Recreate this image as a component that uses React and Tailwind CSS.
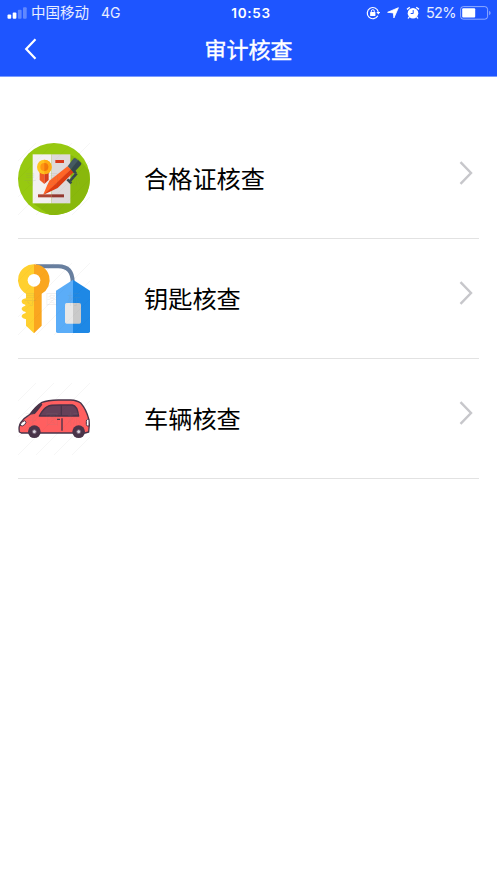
import React from 'react';

// Faint stock-art lines behind each icon
function Hatch({ dark }) {
  return (
    <g stroke={dark ? '#000' : '#999'} strokeOpacity={dark ? '0.03' : '0.1'} strokeWidth="1.5" fill="none">
      <path d="M24 78 78 24M24 132 132 24M24 186 186 24M24 240 240 24M78 240 240 78M132 240 240 132M186 240 240 186" />
    </g>
  );
}

function Watermark() {
  return (
    <text
      x="40"
      y="147"
      fontSize="40"
      letterSpacing="26"
      fill="#888"
      fillOpacity="0.13"
      className="font-['Noto_Sans_CJK_SC',sans-serif]"
    >
      寻图标
    </text>
  );
}

function CertificateIcon() {
  return (
    <svg viewBox="24 24 216 216" className="size-[72px] shrink-0 overflow-visible">
      <Hatch />
      <circle cx="132" cy="132" r="108" fill="#97c910" />
      <path d="M181 59 206 72 236 105A108 108 0 0 1 118 239L68 205H181Z" fill="#89b80c" />
      <path d="M68 58H124V205H68Z" fill="#f3f0f0" />
      <path d="M124 58H181V205H124Z" fill="#dedada" />
      <path d="M89 110H103V147L89 135Z" fill="#f05a24" />
      <path d="M103 110H116V135L103 147Z" fill="#d93a16" />
      <circle cx="103" cy="96" r="22" fill="#ffc31f" />
      <path d="M103 74A22 22 0 0 1 103 118Z" fill="#ffab13" />
      <circle cx="103" cy="96" r="12" fill="#ff9713" />
      <path d="M103 84A12 12 0 0 1 103 108Z" fill="#f27a0c" />
      <path d="M136 75H162V84H136Z" fill="#d9391b" />
      <path d="M84 178H124V187H84Z" fill="#ad4433" />
      <path d="M124 178H162V187H124Z" fill="#94382f" />
      <path d="M191 108 198 115M200 115 179 139M172 133 184 145" stroke="#35474d" strokeWidth="8" fill="none" />
      <path d="M173 94 182 103 128 158 99 180 112 150 118 137Z" fill="#ff6526" />
      <path d="M182 103 191 112 143 159 129 166 99 180 128 155Z" fill="#dc3c11" />
      <path d="M173 94 190 71Q194 67 199 71L206 77 182 103Z" fill="#455a62" />
      <path d="M182 103 205 76 213 83Q216 87 212 91L191 113Z" fill="#34464d" />
      <Hatch dark />
      <Watermark />
    </svg>
  );
}

function KeyIcon() {
  return (
    <svg viewBox="24 24 216 216" className="size-[72px] shrink-0 overflow-visible">
      <Hatch />
      <path d="M78 34H145Q188 34 188 82" fill="none" stroke="#687f9f" strokeWidth="12" />
      <path
        d="M72 28A47 47 0 0 0 48 116V130Q34 132 35 141Q36 147 46 149V152Q34 156 35 163Q37 169 47 171V174Q34 178 35 185Q37 190 48 193V212L72 235Z"
        fill="#ffd02f"
      />
      <path d="M72 28A47 47 0 0 1 95 116V212L72 235Z" fill="#faa61f" />
      <circle cx="72" cy="76" r="19" fill="#fff" />
      <path d="M189 74 138 107V229Q138 234 143 234H189Z" fill="#5badf8" />
      <path d="M189 74 240 107V229Q240 234 235 234H189Z" fill="#1e88e5" />
      <path d="M189 144H170Q165 144 165 149V201Q165 206 170 206H189Z" fill="#e7e7e7" />
      <path d="M189 144H208Q213 144 213 149V201Q213 206 208 206H189Z" fill="#c9c9c9" />
      <Hatch dark />
      <Watermark />
    </svg>
  );
}

function CarIcon() {
  return (
    <svg viewBox="24 24 216 216" className="size-[72px] shrink-0 overflow-visible">
      <Hatch />
      <path
        d="M28 171Q25 155 32 143Q43 128 59 119Q78 93 96 82Q112 76 145 75H182Q202 76 212 84Q228 102 236 131Q240 151 236 171L225 174H34Z"
        fill="#ff5f60"
        stroke="#493449"
        strokeWidth="4"
        strokeLinejoin="round"
      />
      <path d="M59 119Q77 95 95 85L97 89Q82 109 74 117Z" fill="#493449" />
      <path
        d="M88 123Q99 101 113 94Q120 90 151 90H187Q202 92 206 123Z"
        fill="#654159"
        stroke="#493449"
        strokeWidth="4"
        strokeLinejoin="round"
      />
      <path d="M154 90V123M156 130V167M141 133H150" stroke="#493449" strokeWidth="4" fill="none" />
      <path d="M30 151Q33 140 44 137L48 142Q46 150 37 153Z" fill="#fff" stroke="#493449" strokeWidth="3" />
      <path d="M237 133H232Q229 134 229 139V148Q229 153 233 153H237Z" fill="#fff" stroke="#493449" strokeWidth="3" />
      {[73, 206].map((cx) => (
        <g key={cx}>
          <circle cx={cx} cy="170" r="19" fill="#493449" />
          <circle cx={cx} cy="170" r="6" fill="#d9d5df" stroke="#6e586d" strokeWidth="3" />
        </g>
      ))}
      <Hatch dark />
      <Watermark />
    </svg>
  );
}

function StatusBar() {
  return (
    <div className="grid h-[26px] grid-cols-3 items-center pl-[7px] pr-[6px] text-[14px] leading-none">
      <div className="flex items-center text-white/90">
        <svg viewBox="0 0 20 12" className="mr-[4px] h-3 w-5 shrink-0" fill="#fff">
          <rect x="0.5" y="7.5" width="3.7" height="4.3" rx="1" />
          <rect x="5.7" y="5.5" width="3.7" height="6.3" rx="1" />
          <rect x="10.9" y="2.8" width="3.7" height="9" rx="1" opacity="0.3" />
          <rect x="16" y="0.3" width="3.7" height="11.5" rx="1" opacity="0.3" />
        </svg>
        <span className="pt-px text-[14.5px]">中国移动</span>
        <span className="ml-[12px]">4G</span>
      </div>
      <div className="pl-[4px] pt-px text-center text-[13.5px] font-semibold tracking-[0.7px]">10:53</div>
      <div className="flex items-center justify-end">
        {/* rotation lock */}
        <svg viewBox="0 0 14 14" className="mr-[7px] size-[14px]" fill="none" stroke="#fff" strokeWidth="1.2">
          <path d="M11.8 9.8A5.6 5.6 0 1 1 12.3 5.8" />
          <path d="M10.3 6H14.2L12.3 8.6Z" fill="#fff" stroke="none" />
          <rect x="4.1" y="6.1" width="5.3" height="3.9" rx="0.5" fill="#fff" stroke="none" />
          <path d="M5.3 6.3V5.2a1.5 1.5 0 0 1 3 0v1.1" strokeWidth="1" />
        </svg>
        {/* location */}
        <svg viewBox="0 0 12 12" className="mr-[7px] size-3" fill="#fff" stroke="#fff" strokeWidth="0.8" strokeLinejoin="round">
          <path d="M11.4 0.7 6.9 11 6.3 5.9 0.6 5.3Z" />
        </svg>
        {/* alarm */}
        <svg viewBox="0 0 14 14" className="mr-[6px] size-[14px]" fill="#fff">
          <circle cx="7" cy="7.2" r="5.3" />
          <path d="M3.2 10.8 2.1 12.5M10.8 10.8 11.9 12.5" stroke="#fff" strokeWidth="1.3" />
          <path d="M1 3.4 3.8 1.2M13 3.4 10.2 1.2" stroke="#fff" strokeWidth="1.4" fill="none" />
          <path d="M7.2 4.1V7.5H4.7" stroke="#1e55ff" strokeWidth="1" fill="none" />
        </svg>
        <span className="mr-[4px] pt-px text-[14.5px] tracking-[-0.6px] text-white/90">52%</span>
        <svg viewBox="0 0 31 14" className="h-[14px] w-[31px]">
          <rect x="0.6" y="0.6" width="27" height="12.6" rx="2.8" fill="none" stroke="#fff" strokeOpacity="0.5" />
          <rect x="2.2" y="2.2" width="13" height="9.4" rx="1" fill="#fff" />
          <path d="M29.2 4.7Q30.6 5.5 30.6 7T29.2 9.3Z" fill="#fff" opacity="0.5" />
        </svg>
      </div>
    </div>
  );
}

const items = [
  { label: '合格证核查', Icon: CertificateIcon },
  { label: '钥匙核查', Icon: KeyIcon },
  { label: '车辆核查', Icon: CarIcon },
];

function App() {
  return (
    <div className="min-h-screen bg-white font-['Inter','Noto_Sans_CJK_SC',sans-serif]">
      <header className="h-[77px] border-b border-[#7a9bff] bg-[#1e55ff] text-white">
        <StatusBar />
        <div className="grid h-[46px] grid-cols-[48px_1fr_48px] items-center">
          <button className="pl-[24px]" aria-label="返回">
            <svg viewBox="0 0 14 22" className="h-[22px] w-[14px]" fill="none" stroke="#fff" strokeWidth="2.2">
              <path d="M11.5 1.3 2.2 11 11.5 20.7" />
            </svg>
          </button>
          <h1 className="pt-[2px] text-center text-[22px] font-normal leading-none [-webkit-text-stroke:0.4px_white]">
            审计核查
          </h1>
        </div>
      </header>

      <ul className="mx-[18px] pt-[42px]">
        {items.map(({ label, Icon }) => (
          <li key={label} className="flex h-[120px] items-start border-b border-[#e2e2e2] pt-6">
            <Icon />
            <span className="ml-[54px] flex-1 text-[24.2px] leading-[74px] text-black">{label}</span>
            <svg
              viewBox="0 0 14 24"
              className="mr-[6px] mt-[18px] h-6 w-[14px]"
              fill="none"
              stroke="#c7c7cb"
              strokeWidth="2.4"
            >
              <path d="M1.5 1.2 12 12 1.5 22.8" />
            </svg>
          </li>
        ))}
      </ul>
    </div>
  );
}

export default App;
